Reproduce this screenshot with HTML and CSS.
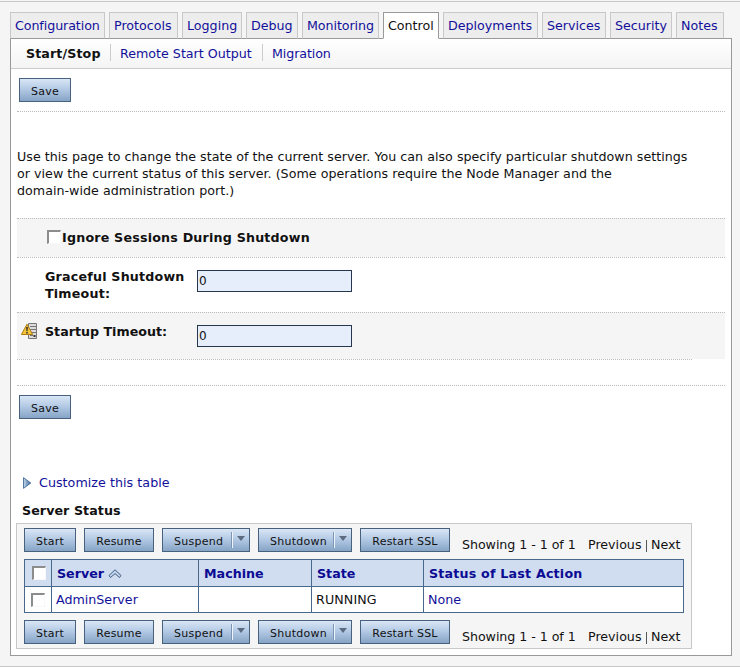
FILE: index.html
```html
<!DOCTYPE html>
<html lang="en">
<head>
<meta charset="utf-8">
<title>Server Control</title>
<link rel="stylesheet" href="styles.css">
</head>
<body>
<div class="page">
  <nav class="tabs">
    <a class="tab w-conf">Configuration</a>
    <a class="tab w-prot">Protocols</a>
    <a class="tab w-logg">Logging</a>
    <a class="tab w-debu">Debug</a>
    <a class="tab w-moni">Monitoring</a>
    <a class="tab w-cont active">Control</a>
    <a class="tab w-depl">Deployments</a>
    <a class="tab w-serv">Services</a>
    <a class="tab w-secu">Security</a>
    <a class="tab w-note">Notes</a>
  </nav>
  <main class="panel">
    <div class="subtabs">
      <b class="sub first">Start/Stop</b>
      <a class="sub second">Remote Start Output</a>
      <a class="sub third">Migration</a>
    </div>
    <div class="save-row"><button class="btn save">Save</button></div>
    <p class="intro">Use this page to change the state of the current server. You can also specify particular shutdown settings<br>or view the current status of this server. (Some operations require the Node Manager and the<br>domain-wide administration port.)</p>
    <form class="fields">
      <div class="field shaded ignore"><i class="check"></i><b class="wide">Ignore Sessions During Shutdown</b></div>
      <div class="field graceful"><span class="mark"></span><b class="label wide">Graceful Shutdown<br>Timeout:</b><input class="box" value="0"></div>
      <div class="field shaded startup">
        <span class="mark"><svg width="17" height="17" viewBox="0 0 17 17">
          <path d="M7.500.5h8v15h-8z" fill="#dcdcdc" stroke="#777"/>
          <path d="M9 3.500h6M9 6.500h6M9 9.500h6M9 12.500h3" stroke="#777"/>
          <path d="M12.500 12h2v2h-2z" fill="#333"/>
          <path d="M6 1.200L11.700 11.500H.4z" fill="#f5c43b" stroke="#b07d14" stroke-linejoin="round"/>
          <path d="M5.200 4h1.600l-.3 4.200h-1z M5.300 9h1.400v1.500H5.300z" fill="#222"/>
        </svg></span>
        <b class="label">Startup Timeout:</b><input class="box" value="0">
      </div>
      <div class="fields-end"></div>
    </form>
    <div class="save-bottom"><button class="btn save">Save</button></div>
    <a class="customize"><svg width="9" height="12" viewBox="0 0 9 12"><defs><linearGradient id="tri" x1="0" x2="1"><stop offset="0" stop-color="#c6daf2"/><stop offset="1" stop-color="#36608f"/></linearGradient></defs><path d="M.5.6L7.800 6 .5 11.400z" fill="url(#tri)" stroke="#56779e"/></svg><span>Customize this table</span></a>
    <h2 class="heading">Server Status</h2>
    <section class="status">
      <div class="toolbar">
        <button class="btn b-start">Start</button>
        <button class="btn b-resume">Resume</button>
        <button class="btn menu b-suspend"><span>Suspend</span><i class="arrow"></i></button>
        <button class="btn menu b-shut"><span>Shutdown</span><i class="arrow"></i></button>
        <button class="btn b-ssl">Restart SSL</button>
        <span class="paging"><span class="showing">Showing 1 - 1 of 1</span><span class="prev">Previous</span><i class="bar"></i><span>Next</span></span>
      </div>
      <table class="grid">
        <colgroup><col class="c1"><col class="c2"><col class="c3"><col class="c4"><col class="c5"></colgroup>
        <tr class="head"><th><i class="check"></i></th><th>Server <svg class="sort" width="14" height="10" viewBox="0 0 14 10"><path d="M1 6.500L7 .8 13 6.500 11.500 8.500 7 4.600 2.500 8.500z" fill="#c1d6ee" stroke="#3f5c80"/></svg></th><th>Machine</th><th>State</th><th class="wide">Status of Last Action</th></tr>
        <tr class="row"><td><i class="check"></i></td><td><a>AdminServer</a></td><td></td><td class="running">RUNNING</td><td><a>None</a></td></tr>
      </table>
      <div class="toolbar">
        <button class="btn b-start">Start</button>
        <button class="btn b-resume">Resume</button>
        <button class="btn menu b-suspend"><span>Suspend</span><i class="arrow"></i></button>
        <button class="btn menu b-shut"><span>Shutdown</span><i class="arrow"></i></button>
        <button class="btn b-ssl">Restart SSL</button>
        <span class="paging"><span class="showing">Showing 1 - 1 of 1</span><span class="prev">Previous</span><i class="bar"></i><span>Next</span></span>
      </div>
    </section>
  </main>
</div>
</body>
</html>
```
FILE: styles.css
```css
* { box-sizing: border-box; }
body {
  margin: 0;
  background: #f5f5f5;
  font: 12.67px/17px "DejaVu Sans", sans-serif;
  color: #111;
}
a { color: #12109a; }
.page {
  height: 666px;
  margin-top: 1px;
  border-top: 1px solid #c8c8c8;
  border-bottom: 1px solid #c8c8c8;
  padding: 10px 8px 0 10px;
}
.tabs { display: flex; gap: 4px; height: 27px; position: relative; z-index: 1; }
.tab {
  height: 27px;
  padding: 4px 0 0 4px;
  border: 1px solid #c8c8c8;
  border-bottom-color: #999;
  background: #ededed;
  white-space: nowrap;
}
.tab.active { background: #fff; border-color: #999; border-bottom-color: #fff; color: #111; }
.w-conf, .w-depl { width: 95px; }
.w-conf, .w-moni { letter-spacing: -0.08px; }
.w-prot { width: 69px; }
.w-logg { width: 60px; }
.w-debu { width: 52px; }
.w-moni { width: 77px; }
.w-cont { width: 56px; }
.w-serv { width: 64px; }
.w-secu { width: 62px; }
.w-note { width: 48px; }
.panel {
  height: 618px;
  width: 722px;
  margin-top: -1px;
  border: 1px solid #999;
  background: #fff;
}
.subtabs {
  display: flex;
  height: 30px;
  padding-top: 5px;
  border-bottom: 1px solid #ccc;
  background: linear-gradient(#fff, #f4f4f4);
}
.sub { height: 17px; line-height: 19px; white-space: nowrap; }
.first { width: 99px; padding-left: 15px; letter-spacing: 0.1px; }
.second { width: 152px; border-left: 1px solid #ccc; padding-left: 9px; }
.third { border-left: 1px solid #ccc; padding-left: 9px; letter-spacing: -0.1px; }
.save-row {
  height: 43px;
  margin: 0 6px;
  padding: 9px 0 0 2px;
  border-bottom: 1px dotted #bbb;
}
.btn {
  height: 24px;
  padding: 3px 0 0;
  border: 1px solid #48627e;
  background: linear-gradient(#d9e6f5, #b4cae5 45%, #86a4c6);
  font: 11px/18px "DejaVu Sans", sans-serif;
  letter-spacing: 0.2px;
  color: #111;
  white-space: nowrap;
}
.save, .b-start { width: 52px; }
.b-resume { width: 70px; }
.b-suspend { width: 88px; }
.b-shut { width: 94px; }
.b-ssl { width: 90px; }
.intro { margin: 36px 0 0 6px; white-space: nowrap; letter-spacing: 0.02px; }
.fields { margin: 19px 6px 0; height: 168px; border-bottom: 1px dotted #bbb; }
.field { display: flex; border-top: 1px dotted #bbb; }
.shaded { background: #f5f5f5; }
.wide { letter-spacing: 0.2px; }
.ignore { height: 39px; padding: 10px 0 0 30px; gap: 1px; }
.ignore .check { margin-top: 1px; }
.graceful { height: 55px; padding-top: 10px; }
.startup { height: 47px; padding-top: 10px; }
.mark { width: 28px; padding-left: 4px; }
.label { width: 152px; }
.fields-end { width: 675px; border-top: 1px dotted #bbb; }
.check {
  display: block;
  width: 14px;
  height: 14px;
  border: 1px solid #f8f8f8;
  border-top: 2px solid #8c8c8c;
  border-left: 2px solid #8c8c8c;
  background: #fff;
}
.box {
  width: 155px;
  height: 22px;
  margin-top: 2px;
  padding: 0 1px;
  border: 1px solid #26364f;
  background: #e6eefb;
  font: 12px "DejaVu Sans", sans-serif;
  color: #111;
}
.save-bottom { padding: 9px 0 0 8px; height: 33px; }
.customize { display: flex; align-items: center; gap: 7px; margin: 55px 0 0 12px; height: 17px; letter-spacing: 0.05px; }
.heading { margin: 11px 0 0 11px; font-size: 12.67px; line-height: 17px; letter-spacing: 0.07px; }
.status { width: 676px; height: 126px; margin: 4px 0 0 5px; padding: 4px 7px; border: 1px solid #c8c8c8; background: #f5f5f5; }
.toolbar { display: flex; gap: 8px; height: 24px; }
.menu { display: flex; padding: 4px 0 0 11px; }
.menu span { flex: 1; text-align: left; letter-spacing: 0.25px; }
.arrow { width: 17px; height: 16px; margin-top: -1px; border-left: 1px solid #eef4fb; box-shadow: -1px 0 #7d95b0; padding: 4px 0 0 4px; }
.arrow::before { content: ""; display: block; width: 0; border: 4px solid transparent; border-top: 5px solid #5b6b80; border-bottom: 0; }
.paging { display: flex; padding: 8px 0 0 4px; white-space: nowrap; }
.showing { width: 126px; letter-spacing: -0.06px; }
.prev { width: 58px; }
.bar { width: 5px; height: 12px; margin-top: 4px; border-left: 1px solid #555; }
.grid { width: 660px; table-layout: fixed; border-collapse: collapse; margin: 7px 0 7px; background: #fff; }
.c1 { width: 27px; }
.c2 { width: 147px; }
.c3 { width: 113px; }
.c4 { width: 112px; }
.c5 { width: 260px; }
.grid th, .grid td { border: 1px solid #48698b; padding: 0 4px; text-align: left; white-space: nowrap; }
.grid th { height: 27px; padding: 0 5px; background: #d0ddf0; color: #0b0b94; }
.grid td { height: 26px; }
.grid .running { letter-spacing: 0.1px; }
.grid .check { margin-left: 2px; }
.sort { vertical-align: -1px; }
```
